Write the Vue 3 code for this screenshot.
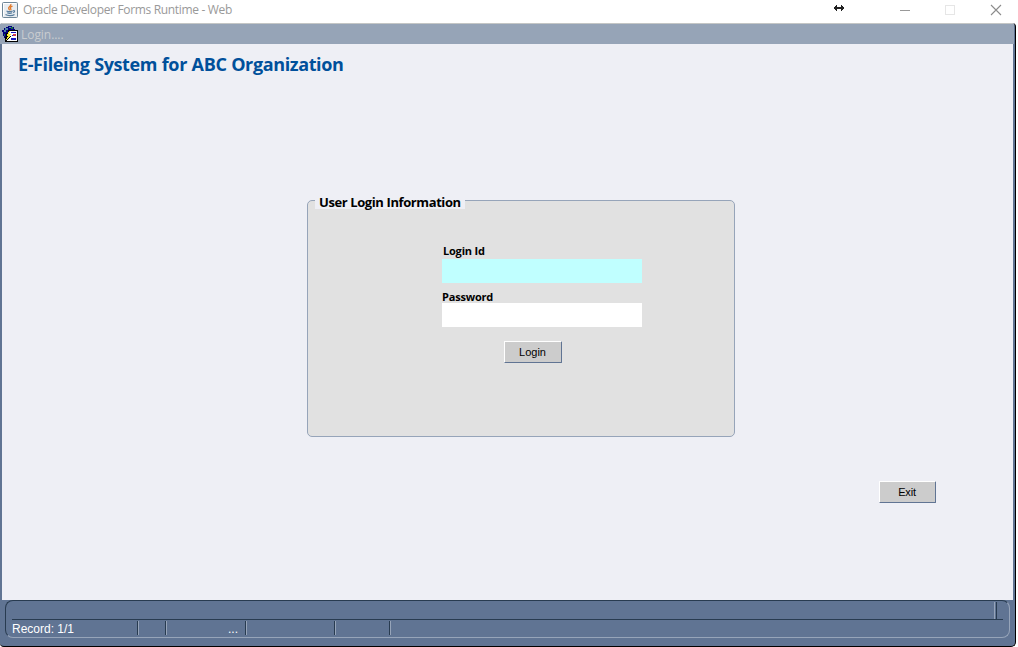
<script setup>
import { ref } from 'vue'

const loginId = ref('')
const password = ref('')
const cells = [
  { key: 'record', text: 'Record: 1/1' },
  { key: 'flag', text: '' },
  { key: 'list', text: '...' },
  { key: 'mode', text: '' },
  { key: 'state', text: '' },
]
</script>

<template>
  <div class="window">
    <header class="titlebar">
      <svg class="java" width="16" height="16" viewBox="0 0 16 16">
        <rect x=".5" y=".5" width="15" height="15" rx="1" fill="#e9edf1" stroke="#6f8798" />
        <path d="M1.500 14V1.500H14" fill="none" stroke="#fff" />
        <path d="M8.800 2C10 4 6 4.500 6.700 6.500c.2.8.9 1 .8 1.800M10.500 4.200C8 5 8 6 8.800 7c.5.7-.3 1.300-.3 1.300" fill="none" stroke="#e07a2c" stroke-width="1.300" />
        <path d="M4.500 9c1.500.8 4.500.7 6.200 0M5.200 10.800c1.400.6 3.600.6 5 0M11.200 8.600c2-.2 1.600 1.600 0 2M3.500 12.600c2.500 1.400 7 1.200 9-.2" fill="none" stroke="#587d9d" stroke-width="1.200" />
      </svg>
      <span class="caption">Oracle Developer Forms Runtime - Web</span>
      <svg class="controls" width="172" height="20" viewBox="0 0 172 20" shape-rendering="crispEdges">
        <path d="M0 9V7h1V6h1V5h1v2h4V5h1v1h1v1h1v2h-1v1h-1v1H7V9H3v2H2v-1H1V9z" fill="#222" />
        <path d="M66 10.500h10" stroke="#999" />
        <rect x="111.500" y="5.500" width="9" height="9" fill="none" stroke="#e6e6e6" />
        <path d="M157 5l10 10M167 5L157 15" stroke="#8c8c8c" stroke-width="1.100" shape-rendering="auto" />
      </svg>
    </header>

    <div class="frame">
      <div class="form-title">
        <svg width="18" height="17" viewBox="0 0 18 17" shape-rendering="crispEdges">
          <path d="M4 1h2V0h4v1h2v2h1v4H5v7H3v-2H2v-2H1V6H0V4h2V2h2z" fill="#00007b" />
          <path d="M3 2h3v2H4v2H2V4h1zM7 1h2v1H7z" fill="#4d83a3" />
          <path d="M9 1h2v2H9zM2 8h1v2H2z" fill="#176b42" />
          <path d="M6 4h10v12H3v-5h1V7h2z" fill="#000" />
          <path d="M7 5h8v10H5v-2h2z" fill="#fff" />
          <path d="M9 6h5v1H9zM9 12h5v2H9z" fill="#1717c0" />
          <path d="M11 8h3v2h-3z" fill="#d43a48" />
          <path d="M10 9h1v1h-1z" fill="#1717c0" />
          <path d="M7 5h1v1H7zM6 6h2v1H6zM6 7h1v1H6zM5 8h4v1H5zM5 9h3v1H5zM6 10h2v1H6zM5 11h2v1H5zM5 12h1v1H5zM4 13h1v1H4z" fill="#f5ed38" />
          <path d="M8 10h1v1H8zM7 11h1v1H7zM6 12h1v1H6zM5 13h1v1H5z" fill="#000" />
        </svg>
        <span>Login....</span>
      </div>

      <main class="canvas">
        <h1>E-Fileing System for ABC Organization</h1>
        <form class="login-panel" @submit.prevent>
          <div class="legend"><span>User Login Information</span></div>
          <div class="fields">
            <label class="id-label" for="login-id"><span>Login Id</span></label>
            <input id="login-id" v-model="loginId" class="active" type="text" />
            <label class="pw-label" for="password"><span>Password</span></label>
            <input id="password" v-model="password" type="password" />
          </div>
          <button class="login" type="submit">Login</button>
        </form>
        <button class="exit" type="button">Exit</button>
      </main>

      <footer class="status">
        <div class="status-box">
          <div class="message"><i></i></div>
          <div class="cells">
            <div v-for="cell in cells" :key="cell.key" :class="['cell', cell.key]">{{ cell.text }}</div>
          </div>
        </div>
      </footer>
    </div>
  </div>
</template>

<style>
body { background: #fff; overflow: hidden; }
</style>

<style scoped>
* { box-sizing: border-box; }
.window { width: 1018px; height: 647px; background: #fff; font-family: "Open Sans", "Noto Sans", sans-serif; }
.titlebar { height: 23px; display: flex; align-items: flex-start; padding: 0 12px 0 2px; }
.java { margin-top: 2px; flex: none; }
.caption { margin-left: 5px; font-size: 12px; line-height: 20px; color: #999; white-space: nowrap; letter-spacing: -0.33px; }
.controls { margin-left: auto; flex: none; }
.frame { width: 1016px; height: 624px; display: flex; flex-direction: column; background: #607493; border-right: 1px solid #000; border-bottom: 1px solid #000; border-radius: 3px 4px 5px 4px; overflow: hidden; }
.form-title { height: 21px; margin-right: 1px; border-top: 1px solid #c4c6c5; background: #96a4b7; display: flex; flex: none; padding-left: 2px; color: #c9ccd0; font-size: 12px; line-height: 21px; }
.form-title svg { margin-top: 2px; flex: none; }
.form-title span { margin-left: 1px; letter-spacing: -.05px; }
.canvas { height: 556px; margin: 0 2px; flex: none; background: #eeeff5; display: flex; flex-direction: column; }
h1 { margin: 8px 0 0 16px; height: 26px; color: #00509b; font-size: 18px; line-height: 25px; font-weight: 700; white-space: nowrap; letter-spacing: -0.38px; word-spacing: .4px; }
.login-panel { width: 428px; height: 237px; margin: 122px 0 0 305px; border: 1px solid #96a4b9; border-radius: 5px; background: #e1e1e1; display: flex; flex-direction: column; flex: none; }
.legend { width: 150px; height: 12px; margin: -4px 0 0 7px; padding-left: 4px; background: #eeeff5; flex: none; color: #000; font-size: 13px; line-height: 10px; font-weight: 700; white-space: nowrap; letter-spacing: -0.4px; }
.fields { width: 200px; margin: 34px 0 0 134px; display: flex; flex-direction: column; }
label { display: block; font-size: 11px; font-weight: 700; white-space: nowrap; letter-spacing: -0.2px; }
.id-label { height: 16px; line-height: 16px; padding-left: 1px; }
.pw-label { height: 20px; line-height: 28px; }
input { display: block; width: 200px; height: 24px; border: 0; outline: 0; padding: 2px 4px; background: #fff; border-radius: 0; }
input.active { background: #c0ffff; }
button { height: 22px; padding: 0 1px 0 0; border: 1px solid; border-color: #fff #607493 #607493 #fff; border-radius: 1px; background: #ccc; color: #000; font: 11px/20px "Liberation Sans", Arial, sans-serif; }
.login { width: 58px; margin: 14px 0 0 196px; }
.exit { width: 57px; margin: 44px 0 0 877px; letter-spacing: -.15px; }
.status { height: 46px; flex: none; padding: 0 5px; }
.status-box { width: 1005px; height: 38px; border: 1px solid; border-color: #283b50 #96a4b9 #96a4b9 #283b50; border-radius: 8px; padding: 0 6px; }
.message { height: 19px; width: 991px; border-bottom: 1px solid #283b50; display: flex; justify-content: flex-end; }
.message i { width: 3px; height: 17px; margin: 1px 6px 0 0; border-left: 1px solid #96a4b9; border-right: 1px solid #283b50; }
.cells { display: flex; height: 16px; padding-top: 1px; color: #fff; font: 12px/16px "Liberation Sans", Arial, sans-serif; }
.cell { height: 14px; border-right: 1px solid #96a4b9; box-shadow: inset -1px 0 #283b50; white-space: nowrap; }
.record { width: 127px; }
.flag { width: 28px; }
.list { width: 80px; padding-right: 8px; text-align: right; }
.mode { width: 89px; }
.state { width: 55px; }
</style>
